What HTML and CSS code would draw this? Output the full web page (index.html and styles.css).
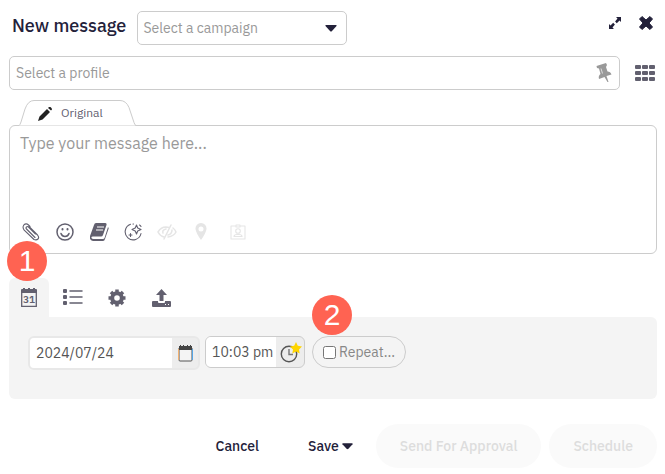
FILE: index.html
```
<!DOCTYPE html>
<html lang="en">
<head>
    <meta charset="UTF-8">
    <meta name="viewport" content="width=device-width, initial-scale=1.0">
    <title>New message</title>
    <link rel="stylesheet" href="styles.css">
</head>
<body>
    <form class="composer">
        <header class="header">
            <h1>New message</h1>
            <div class="campaign">
                <select aria-label="Campaign">
                    <option>Select a campaign</option>
                </select>
                <svg class="caret" width="12" height="7" viewBox="0 0 12 7"><path d="M1 0h10q1 0 .5 1L7 6q-1 1-2 0L.5 1Q0 0 1 0z"/></svg>
            </div>
            <div class="window-buttons">
                <button type="button" aria-label="Expand">
                    <svg width="12" height="12" viewBox="0 0 12 12"><path d="M7 0h5v5l-1.500-1.500-2.700 2.700-1.700-1.700L8.500 1.500zM5 12H0V7l1.500 1.500 2.700-2.700 1.700 1.700L3.500 10.500z"/></svg>
                </button>
                <button type="button" aria-label="Close">
                    <svg width="14" height="14" viewBox="0 0 14 14"><path d="M3 .5 7 4 11 .5 13.500 3 10 7l3.500 4-2.500 2.500L7 10l-4 3.500L.5 11 4 7 .5 3z" stroke="#23213a" stroke-linejoin="round"/></svg>
                </button>
            </div>
        </header>

        <div class="profile-row">
            <div class="profile">
                <input type="text" placeholder="Select a profile" aria-label="Profile">
                <svg class="pin" width="16" height="20" viewBox="0 0 16 20"><path d="M.5 3 10 0l1 2-1 2 1.500 4.500q3 0 4 3l-5 1.500L12.500 19h-1L8.500 14 3 16q-1-3 1.500-5L3 5.500 1 5z"/><path d="m5 5.500 1.500 5" stroke="#ddd"/></svg>
            </div>
            <button type="button" class="grid-button" aria-label="All profiles">
                <svg width="21" height="16" viewBox="0 0 21 16"><rect width="6" height="4" rx="1"/><rect x="7" width="6" height="4" rx="1"/><rect x="14" width="6" height="4" rx="1"/><rect y="6" width="6" height="4" rx="1"/><rect x="7" y="6" width="6" height="4" rx="1"/><rect x="14" y="6" width="6" height="4" rx="1"/><rect y="12" width="6" height="4" rx="1"/><rect x="7" y="12" width="6" height="4" rx="1"/><rect x="14" y="12" width="6" height="4" rx="1"/></svg>
            </button>
        </div>

        <div class="message">
            <button type="button" class="original-tab">
                <svg class="tab-shape" width="118" height="26" viewBox="0 0 118 26"><path d="M0 25.500h1Q2 25 3 22l4-13Q10 .5 16 .5h86q6 0 9 7l5 15q1 3 2 3"/></svg>
                <svg class="pencil" width="14" height="14" viewBox="0 0 14 14"><path d="M0 14 1.500 9.500 9 2l3 3-7.500 7.500zM10 1l1-1q1-.5 2 .5t1 2l-1 1z"/></svg>
                <span>Original</span>
            </button>
            <div class="message-box">
                <textarea placeholder="Type your message here..." aria-label="Message"></textarea>
                <div class="tools">
                    <button type="button" aria-label="Attach file">
                        <svg width="18" height="18" viewBox="0 0 18 18" class="line thin"><path d="M13 14.500 4.500 6M7 3.500l8.500 8.500q2 2.500.5 4t-4 .5L2.200 7.200Q.2 4.500 1.700 2.200 4-.2 6.500 2L8 3.500M4.500 6q-1-1 0-2t2 0l7 7"/></svg>
                    </button>
                    <button type="button" aria-label="Emoji">
                        <svg width="18" height="18" viewBox="0 0 18 18" class="line"><circle cx="9" cy="9" r="8"/><path d="M5 10.500q1 3 4 3t4-3"/><path d="M6.500 6v.5M11.500 6v.5" stroke-width="2"/></svg>
                    </button>
                    <button type="button" aria-label="Library">
                        <svg width="19" height="18" viewBox="0 0 19 18"><path d="M6 0h9q2 0 1.500 2L13 12q-.5 1.500-2 1.500H3q-2 0-1.500 1.500.5 1 2 1H13q1 0 1.500-1L18 4q1 1 .5 2L15 16q-.5 2-2 2H3q-4-1-3-5L4 2q.5-2 2-2z"/><path d="M7 4h7M6 7h7" stroke="#fff" stroke-width="1.200"/></svg>
                    </button>
                    <button type="button" aria-label="AI assistant">
                        <svg width="19" height="18" viewBox="0 0 19 18" class="line thin"><path d="M6.500 1.300A8 8 0 1 0 17 10.500M9 1h.5M15.500 2q1 .5 1.500 1.500"/><path d="M12.500 2 13.700 5 17 6.500 13.700 8 12.500 11 11.200 8 8 6.500 11.200 5z"/><path d="M6.500 10.500v3M5 12h3"/></svg>
                    </button>
                    <button type="button" aria-label="Hide preview" disabled>
                        <svg width="20" height="16" viewBox="0 0 20 16" class="line"><path d="M7 13Q3 12 1 8q3-5 8-5l3 .5M9 5Q5 6 6 9M16 4q2 1.500 3 4-2 4-8 5M14 1 7 15M15 6q0 4-4 5"/></svg>
                    </button>
                    <button type="button" aria-label="Location" disabled>
                        <svg width="12" height="17" viewBox="0 0 12 17"><path fill-rule="evenodd" d="M6 0a5.500 5.500 0 0 1 5.500 6Q11 10 6 17 1 10 .5 6A5.500 5.500 0 0 1 6 0zm0 3.500a2.500 2.500 0 1 0 0 5 2.500 2.500 0 0 0 0-5z"/></svg>
                    </button>
                    <button type="button" aria-label="Contact" disabled>
                        <svg width="16" height="16" viewBox="0 0 16 16" class="line thin"><path d="M5 2H1v13h14V2h-4M6 1h4v2H6z"/><circle cx="8" cy="7" r="2.300"/><path d="M4 12.500q0-2 3-2h2q3 0 3 2z"/></svg>
                    </button>
                </div>
            </div>
        </div>

        <section class="options">
            <nav class="option-tabs">
                <span class="marker">1</span>
                <button type="button" class="active" aria-label="Schedule date">
                    <svg width="16" height="19" viewBox="0 0 16 19"><path d="M0 2q0-1 1-1h1V0h2v1h3V0h2v1h3V0h2v1h1q1 0 1 1v3H0z"/><path d="M.7 5v13.300h14.600V5" fill="none" stroke="#62606f" stroke-width="1.300"/><text x="8" y="15">31</text></svg>
                </button>
                <button type="button" aria-label="List">
                    <svg width="20" height="17" viewBox="0 0 20 17"><rect width="4" height="4" rx="1"/><rect y="6" width="4" height="4" rx="1"/><rect y="12" width="4" height="4" rx="1"/><path d="M7 2h12M7 8h12M7 14h12" stroke="#62606f" stroke-width="1.500" stroke-linecap="round"/></svg>
                </button>
                <button type="button" aria-label="Settings">
                    <svg width="18" height="18" viewBox="0 0 18 18"><circle cx="9" cy="9" r="4.800" fill="none" stroke="#62606f" stroke-width="4"/><path d="M9 .5v3M9 14.500v3M.5 9h3M14.500 9h3M3 3l2 2M13 13l2 2M3 15l2-2M13 5l2-2" stroke="#62606f" stroke-width="3.500"/></svg>
                </button>
                <button type="button" aria-label="Upload">
                    <svg width="19" height="18" viewBox="0 0 19 18"><path d="m9.500 0 5.500 6h-3.500v6h-4V6H4z"/><path fill-rule="evenodd" d="M1 12h5v1q0 1 1 1h5q1 0 1-1v-1h5q1 0 1 1v4q0 1-1 1H1q-1 0-1-1v-4q0-1 1-1zm12 3v1h1v-1zm3 0v1h1v-1z"/></svg>
                </button>
            </nav>
            <div class="panel">
                <div class="field date-field">
                    <input type="text" value="2024/07/24" aria-label="Date">
                    <button type="button" aria-label="Open calendar">
                        <svg width="15" height="17" viewBox="0 0 15 17"><path d="M1 3h13v12q0 1-1 1H2q-1 0-1-1z" fill="#f4f4f4" stroke="#555"/><path d="M1 1h1V0h1v1h2V0h1v1h3V0h1v1h2V0h1v1h1v4H1z" fill="#444"/><path d="M.5 4v11" stroke="#f0b070"/><path d="M14.500 4v11" stroke="#55a5e5"/></svg>
                    </button>
                </div>
                <div class="field time-field">
                    <input type="text" value="10:03 pm" aria-label="Time">
                    <button type="button" aria-label="Best time">
                        <svg width="22" height="21" viewBox="0 0 22 21"><circle cx="9" cy="12" r="7.700" fill="none" stroke="#555" stroke-width="1.400"/><path d="M9 7v5.500h4" fill="none" stroke="#777" stroke-width="1.400"/><path d="m16 0 1.800 3.800 4.200.6-3 3 .7 4.100-3.700-2-3.700 2 .7-4.100-3-3 4.200-.6z" fill="#ffd500"/></svg>
                    </button>
                </div>
                <div class="repeat">
                    <span class="marker">2</span>
                    <label><input type="checkbox">Repeat...</label>
                </div>
            </div>
        </section>

        <footer class="footer">
            <button type="button" class="plain cancel">Cancel</button>
            <button type="button" class="plain save">Save <svg class="caret" width="11" height="7" viewBox="0 0 12 7"><path d="M1 0h10q1 0 .5 1L7 6q-1 1-2 0L.5 1Q0 0 1 0z"/></svg></button>
            <button type="button" class="pill" disabled>Send For Approval</button>
            <button type="submit" class="pill" disabled>Schedule</button>
        </footer>
    </form>
</body>
</html>
```
FILE: styles.css
```
* { box-sizing: border-box; }
body { margin: 0; background: #fff; color: #23213a; font-family: "IBM Plex Sans", Roboto, sans-serif; font-size: 14px; }
button, input, select, textarea { font: inherit; color: inherit; margin: 0; }
button { padding: 0; border: none; background: none; cursor: pointer; }
button:disabled { cursor: default; }
svg { display: block; fill: currentColor; }
svg.line { fill: none; stroke: currentColor; stroke-width: 1.5; stroke-linecap: round; stroke-linejoin: round; }
svg.thin { stroke-width: 1.1; }
.composer { padding: 11px 8px 6px 9px; }

.header { display: flex; align-items: center; }
.header h1 { margin: 0 11px 4px 3px; font-size: 18px; font-weight: 500; line-height: 24px; white-space: nowrap; }
.campaign { display: grid; width: 210px; height: 34px; align-items: center; }
.campaign select { grid-area: 1 / 1; width: 100%; height: 34px; padding: 0 5px; border: 1px solid #ccc; border-radius: 5px; background: #fff; color: #999; appearance: none; }
.campaign .caret { grid-area: 1 / 1; justify-self: end; margin-right: 10px; pointer-events: none; }
.window-buttons { display: flex; align-items: center; gap: 18px; margin: 0 4px 10px auto; }

.profile-row { display: flex; align-items: center; gap: 15px; margin-top: 11px; }
.profile { display: flex; flex: 1; align-items: center; height: 34px; padding: 0 7px 0 6px; border: 1px solid #ccc; border-radius: 5px; }
.profile input { flex: 1; min-width: 0; padding: 0; border: none; outline: none; }
.pin { color: #999; }
.grid-button { margin-right: 1px; color: #62606f; }
::placeholder { color: #999; opacity: 1; }

.message { margin-top: 10px; }
.original-tab { position: relative; z-index: 1; display: flex; align-items: center; gap: 9px; width: 118px; height: 26px; margin: 0 0 -1px 9px; padding: 0 0 2px 20px; color: #62606f; font-size: 12px; }
.tab-shape { position: absolute; inset: 0; z-index: -1; fill: #fff; stroke: #ccc; }
.pencil { margin-top: 4px; color: #222; }
.message-box { border: 1px solid #ccc; border-radius: 6px; }
.message-box textarea { display: block; width: 100%; height: 94px; padding: 7px 10px; border: none; border-radius: 6px; outline: none; background: none; font-size: 16px; line-height: 20px; resize: none; }
.tools { display: flex; align-items: center; height: 33px; padding: 0 0 10px 4px; color: #62606f; }
.tools button { display: grid; place-items: center; width: 34px; height: 22px; }
.tools button:disabled { color: #e5e5e5; }
.tools button:last-child { width: 40px; }

.option-tabs { position: relative; display: flex; gap: 4px; margin-top: 24px; color: #62606f; }
.option-tabs button { display: grid; place-items: center; width: 40px; height: 39px; border-radius: 6px 6px 0 0; }
.option-tabs .active { background: #f4f4f4; }
.option-tabs text { font-size: 10px; font-weight: 600; text-anchor: middle; }
.marker { position: absolute; z-index: 2; width: 40px; height: 40px; border-radius: 50%; background: #ff6352; color: #fff; font-family: "Liberation Sans", Arial, sans-serif; font-size: 30px; line-height: 40px; text-align: center; }
.option-tabs .marker { top: -37px; left: -2px; }

.panel { display: flex; align-items: flex-start; height: 82px; padding: 19px; background: #f4f4f4; border-radius: 0 6px 6px 6px; }
.field { display: flex; border-radius: 6px; background: #ededed; color: #555; overflow: hidden; }
.field input { min-width: 0; border: none; outline: none; background: #fff; }
.field button { display: grid; flex: 1; place-items: center; }
.date-field { width: 172px; height: 34px; border: 2px solid #e8e8e8; }
.date-field input { width: 142px; padding: 0 6px; }
.time-field { width: 100px; height: 32px; margin-left: 5px; border: 1px solid #ccc; }
.time-field input { width: 70px; padding: 0 0 0 6px; }
.time-field button { padding-left: 2px; }
.repeat { position: relative; margin-left: 7px; }
.repeat .marker { top: -41px; left: 0; }
.repeat label { display: flex; align-items: center; gap: 3px; width: 94px; height: 32px; padding-left: 10px; border: 1px solid #ccc; border-radius: 16px; color: #888; }
.repeat input { width: 13px; height: 13px; }

.footer { display: flex; justify-content: flex-end; align-items: center; margin-top: 25px; font-weight: 500; }
.plain { display: flex; align-items: center; gap: 3px; height: 44px; }
.cancel { margin-right: 49px; }
.save { margin-right: 23px; }
.pill { height: 44px; padding: 0 24px; border-radius: 22px; background: #fafafa; color: #ddd; }
.pill + .pill { margin-left: 8px; }
```
